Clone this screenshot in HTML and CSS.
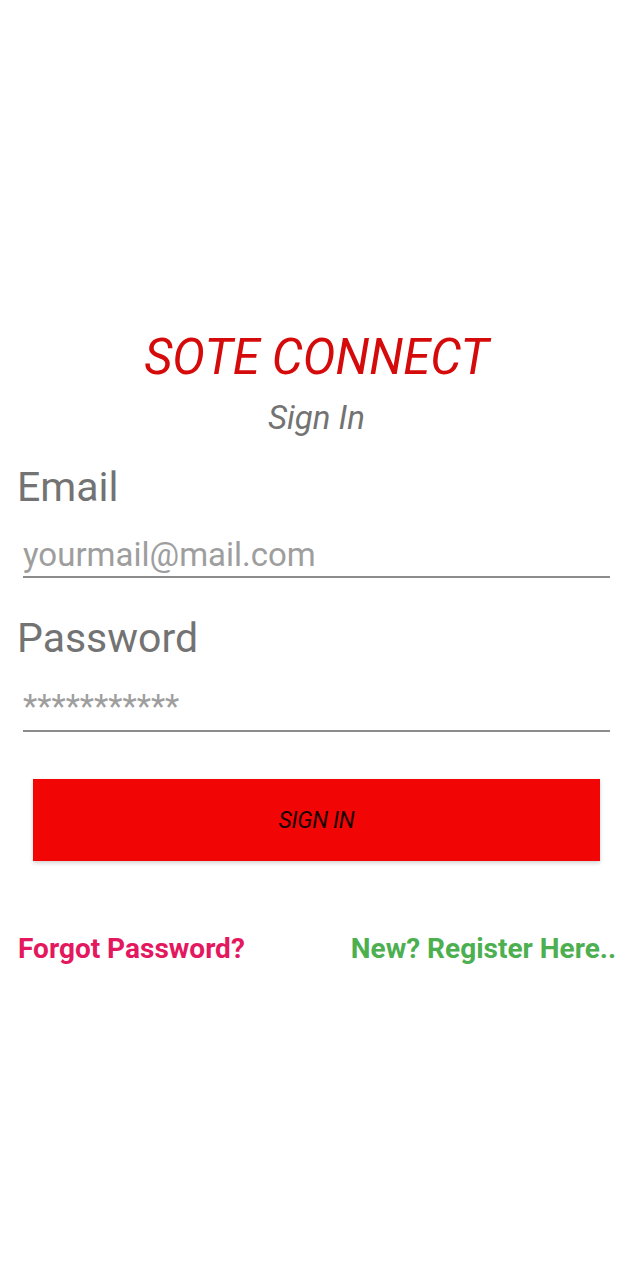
FILE: index.html
```html
<!DOCTYPE html>
<html lang="en">
<head>
<meta charset="utf-8">
<title>SOTE CONNECT - Sign In</title>
<link rel="stylesheet" href="styles.css">
</head>
<body>
<main class="login">
  <h1 class="brand">SOTE CONNECT</h1>
  <p class="subtitle">Sign In</p>
  <form class="form">
    <label class="field-label" for="email">Email</label>
    <input class="field-input" id="email" type="email" placeholder="yourmail@mail.com">
    <label class="field-label field-label-pw" for="password">Password</label>
    <input class="field-input field-input-pw" id="password" type="text" placeholder="***********">
    <button class="btn-signin" type="button">SIGN IN</button>
  </form>
  <div class="links">
    <a class="link link-forgot" href="#">Forgot Password?</a>
    <a class="link link-register" href="#">New? Register Here..</a>
  </div>
</main>
</body>
</html>
```

FILE: styles.css
```css
html, body {
  margin: 0;
  padding: 0;
  background: #ffffff;
}

body {
  width: 633px;
  min-height: 1280px;
  font-family: Roboto, "Noto Sans", Arial, sans-serif;
}

.login {
  padding-top: 329px;
  display: flex;
  flex-direction: column;
}

.brand {
  margin: 0;
  text-align: center;
  font-size: 49px;
  line-height: 58px;
  font-weight: 400;
  font-style: italic;
  color: #d50a0a;
}

.subtitle {
  margin: 11px 0 0;
  text-align: center;
  font-size: 33px;
  line-height: 40px;
  font-style: italic;
  color: #737373;
}

.form {
  display: flex;
  flex-direction: column;
  margin-top: 25px;
}

.field-label {
  margin-left: 17px;
  font-size: 41px;
  line-height: 48px;
  color: #737373;
}

.field-label-pw {
  margin-top: 36px;
}

.field-input {
  margin: 21px 23px 0;
  padding: 0;
  height: 46px;
  box-sizing: border-box;
  border: none;
  border-bottom: 2px solid #8c8c8c;
  outline: none;
  background: transparent;
  font-family: Roboto, "Noto Sans", Arial, sans-serif;
  font-size: 33px;
  color: #333;
}

.field-input::placeholder {
  color: #9e9e9e;
  opacity: 1;
}

.field-input-pw {
  margin-top: 20px;
  height: 50px;
}

.btn-signin {
  margin: 47px 33px 0;
  height: 82px;
  border: none;
  border-radius: 0;
  background: #f20505;
  box-shadow: 0 2px 4px rgba(0, 0, 0, 0.18);
  font-family: Roboto, "Noto Sans", Arial, sans-serif;
  font-size: 23px;
  font-style: italic;
  color: #1a0000;
  letter-spacing: -0.3px;
}

.links {
  display: flex;
  justify-content: space-between;
  padding: 0 17px 0 18px;
  margin-top: 72px;
}

.link {
  font-size: 28px;
  line-height: 32px;
  font-weight: 700;
  text-decoration: none;
}

.link-forgot {
  color: #e3185e;
}

.link-register {
  color: #4caf50;
}
```
